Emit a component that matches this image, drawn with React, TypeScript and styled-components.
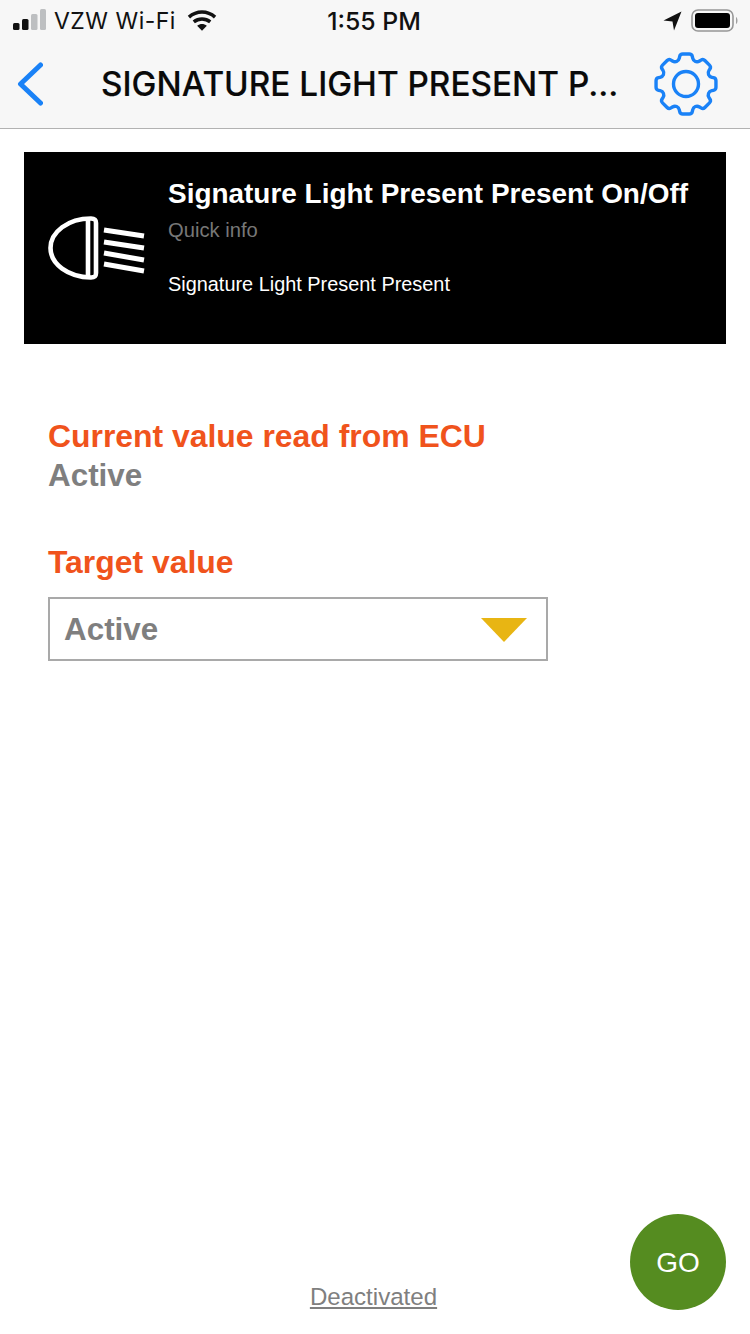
import React from "react";
import styled, { createGlobalStyle } from "styled-components";

const Global = createGlobalStyle`
  html, body { margin: 0; padding: 0; background: #fff; }
  #root { width: 750px; height: 1334px; }
`;

const Page = styled.div`
  position: relative;
  width: 750px;
  height: 1334px;
  display: flex;
  flex-direction: column;
  overflow: hidden;
  background: #fff;
  font-family: "Liberation Sans", Arial, sans-serif;
`;

const Header = styled.header`
  height: 128px;
  background: #f7f7f7;
  border-bottom: 1px solid #b2b2b2;
  display: flex;
  flex-direction: column;
  flex: none;
`;

const StatusBar = styled.div`
  height: 41px;
  padding: 0 11px 0 13px;
  display: grid;
  grid-template-columns: 1fr auto 1fr;
  align-items: center;
  font-family: Inter, sans-serif;
  font-size: 23px;
  color: #111;
`;

const StatusLeft = styled.div`
  display: flex;
  align-items: center;
  gap: 8px;
`;

const StatusRight = styled.div`
  display: flex;
  align-items: center;
  justify-content: flex-end;
  gap: 9px;
`;

const StatusTime = styled.span`
  font-weight: 500;
  font-size: 24.8px;
  margin-right: 4px;
`;

const Carrier = styled.span`
  letter-spacing: 0.5px;
  margin-right: 3px;
`;

const SignalIcon = styled.svg`
  margin-bottom: 2px;
`;

const Nav = styled.nav`
  flex: 1;
  display: flex;
  align-items: center;
  padding: 0 32px 2px 17px;
`;

const NavTitle = styled.h1`
  flex: 1;
  margin: 2px 0 0;
  padding-left: 58px;
  font-family: Inter, sans-serif;
  font-weight: 500;
  font-size: 33.3px;
  line-height: 1;
  color: #0a0a0a;
  white-space: nowrap;
  -webkit-text-stroke: 0.15px #0a0a0a;
`;

const Banner = styled.section`
  margin: 23px 24px 0;
  height: 192px;
  background: #000;
  display: flex;
  flex: none;
`;

const BannerIcon = styled.div`
  width: 144px;
  flex: none;
  display: flex;
  align-items: center;
  padding-left: 24px;
  box-sizing: border-box;
`;

const BannerBody = styled.div`
  display: flex;
  flex-direction: column;
  padding-top: 27px;
`;

const BannerTitle = styled.div`
  color: #fff;
  font-weight: 700;
  font-size: 27.95px;
  line-height: 30px;
  white-space: nowrap;
`;

const BannerHint = styled.div`
  color: #777;
  font-size: 20.2px;
  line-height: 24px;
  margin-top: 9px;
`;

const BannerText = styled.div`
  color: #fff;
  font-size: 19.9px;
  line-height: 24px;
  margin-top: 30px;
`;

const Content = styled.main`
  padding: 73px 48px 0;
  display: flex;
  flex-direction: column;
  flex: 1;
`;

const FieldLabel = styled.div`
  color: #f0531c;
  font-weight: 700;
  font-size: 31.9px;
  line-height: 38px;
`;

const FieldValue = styled.div`
  color: #7f7f7f;
  font-weight: 700;
  font-size: 31.4px;
  line-height: 42px;
  margin-bottom: 46px;
`;

const Select = styled.div`
  width: 500px;
  height: 64px;
  margin-top: 16px;
  box-sizing: border-box;
  border: 2px solid #a9a9a9;
  padding: 2px 19px 0 14px;
  display: flex;
  align-items: center;
  justify-content: space-between;
  color: #7f7f7f;
  font-weight: 700;
  font-size: 31.4px;
`;

const CaretIcon = styled.svg`
  margin-top: -2px;
`;

const Footer = styled.footer`
  flex: none;
  height: 70px;
  display: flex;
  justify-content: center;
`;

const DeactivatedLink = styled.a`
  color: #7f7f7f;
  font-size: 24.1px;
  line-height: 28px;
  margin-top: 19px;
  margin-right: 3px;
  text-decoration: underline;
`;

const GoButton = styled.button`
  position: absolute;
  right: 24px;
  bottom: 24px;
  width: 96px;
  height: 96px;
  border: 0;
  padding: 2px 0 0;
  border-radius: 50%;
  background: #558c20;
  color: #fff;
  font-family: "Liberation Sans", Arial, sans-serif;
  font-size: 28px;
`;

const gearPath = (() => {
  const c = 32, ro = 30.5, ri = 24.5, n = 8;
  const pts: [number, number][] = [];
  const p = (r: number, t: number): [number, number] => [c + r * Math.cos(t), c + r * Math.sin(t)];
  for (let i = 0; i < n; i++) {
    const a = (i * 2 * Math.PI) / n - Math.PI / 2;
    pts.push(p(ri, a - 0.3), p(ro, a - 0.19), p(ro, a + 0.19), p(ri, a + 0.3));
  }
  const lerp = (u: [number, number], v: [number, number], d: number): string => {
    const len = Math.hypot(v[0] - u[0], v[1] - u[1]);
    const k = Math.min(d / len, 0.5);
    return `${(u[0] + (v[0] - u[0]) * k).toFixed(2)} ${(u[1] + (v[1] - u[1]) * k).toFixed(2)}`;
  };
  let d = "";
  pts.forEach((pt, i) => {
    const prev = pts[(i + pts.length - 1) % pts.length];
    const next = pts[(i + 1) % pts.length];
    d += `${i === 0 ? "M" : "L"}${lerp(pt, prev, 2.5)}Q${pt[0].toFixed(2)} ${pt[1].toFixed(2)} ${lerp(pt, next, 2.5)}`;
  });
  return d + "Z";
})();

const Gear = () => (
  <svg width="64" height="64" viewBox="0 0 64 64" fill="none" stroke="#1a82f7" strokeWidth="3.4" strokeLinejoin="round">
    <path d={gearPath} />
    <circle cx="32" cy="32" r="12.5" />
  </svg>
);

const Chevron = () => (
  <svg width="26" height="44" viewBox="0 0 26 44" fill="none" stroke="#1a82f7" strokeWidth="5" strokeLinecap="round" strokeLinejoin="round">
    <path d="M23.5 3 L3.5 22 L23.5 41" />
  </svg>
);

const Signal = () => (
  <SignalIcon width="33" height="22" viewBox="0 0 33 22">
    <rect x="0" y="14" width="6.5" height="7" rx="1.5" fill="#111" />
    <rect x="9" y="10" width="6.5" height="11" rx="1.5" fill="#111" />
    <rect x="18" y="5" width="6.5" height="16" rx="1.5" fill="#bdbfc1" />
    <rect x="27" y="0" width="6" height="21" rx="1.5" fill="#bdbfc1" />
  </SignalIcon>
);

const Wifi = () => (
  <svg width="30" height="23" viewBox="0 0 31 23" fill="none" stroke="#111" strokeWidth="3.6">
    <path d="M2 8 C10 1 21 1 29 8" />
    <path d="M7 13 C12 9 19 9 24 13" />
    <path d="M15.5 22 L10.5 17 C13.5 14.6 17.5 14.6 20.5 17 Z" fill="#111" stroke="none" />
  </svg>
);

const LocationArrow = () => (
  <svg width="19" height="20" viewBox="0 0 19 20">
    <path d="M18.5 0.5 L0.5 9.5 L9.5 10.5 L11 19.5 Z" fill="#111" />
  </svg>
);

const Battery = () => (
  <svg width="48" height="24" viewBox="0 0 48 24">
    <rect x="1" y="1" width="41" height="21" rx="6" fill="none" stroke="#979797" strokeWidth="1.6" />
    <rect x="4" y="4" width="35" height="15" rx="3" fill="#000" />
    <path d="M45 8 C47 9 47 14 45 15 Z" fill="#a0a0a0" />
  </svg>
);

const Headlight = () => (
  <svg width="98" height="64" viewBox="0 0 98 64" fill="none" stroke="#fff" strokeWidth="4.6" strokeLinejoin="round" strokeLinecap="round">
    <path d="M43 2.5 C20 2.5 2.5 16 2.5 32 C2.5 48 20 61 43 61.5 C47 61.5 48 60 48 57 L48 7 C48 4 47 2.5 43 2.5 Z" />
    <path d="M40 4 L40 60" />
    <g strokeWidth="5" strokeLinecap="butt">
      <path d="M56 14 L96 20" />
      <path d="M56 26 L96 32" />
      <path d="M56 37 L96 44" />
      <path d="M56 48 L96 55" />
    </g>
  </svg>
);

const Caret = () => (
  <CaretIcon width="46" height="25" viewBox="0 0 46 25">
    <path d="M0 1 H46 L23 25 Z" fill="#e8b513" />
  </CaretIcon>
);

export default function App() {
  return (
    <Page>
      <Global />
      <Header>
        <StatusBar>
          <StatusLeft>
            <Signal />
            <Carrier>VZW Wi-Fi</Carrier>
            <Wifi />
          </StatusLeft>
          <StatusTime>1:55 PM</StatusTime>
          <StatusRight>
            <LocationArrow />
            <Battery />
          </StatusRight>
        </StatusBar>
        <Nav>
          <Chevron />
          <NavTitle>SIGNATURE LIGHT PRESENT P...</NavTitle>
          <Gear />
        </Nav>
      </Header>
      <Banner>
        <BannerIcon>
          <Headlight />
        </BannerIcon>
        <BannerBody>
          <BannerTitle>Signature Light Present Present On/Off</BannerTitle>
          <BannerHint>Quick info</BannerHint>
          <BannerText>Signature Light Present Present</BannerText>
        </BannerBody>
      </Banner>
      <Content>
        <FieldLabel>Current value read from ECU</FieldLabel>
        <FieldValue>Active</FieldValue>
        <FieldLabel>Target value</FieldLabel>
        <Select>
          <span>Active</span>
          <Caret />
        </Select>
      </Content>
      <Footer>
        <DeactivatedLink>Deactivated</DeactivatedLink>
      </Footer>
      <GoButton>GO</GoButton>
    </Page>
  );
}
